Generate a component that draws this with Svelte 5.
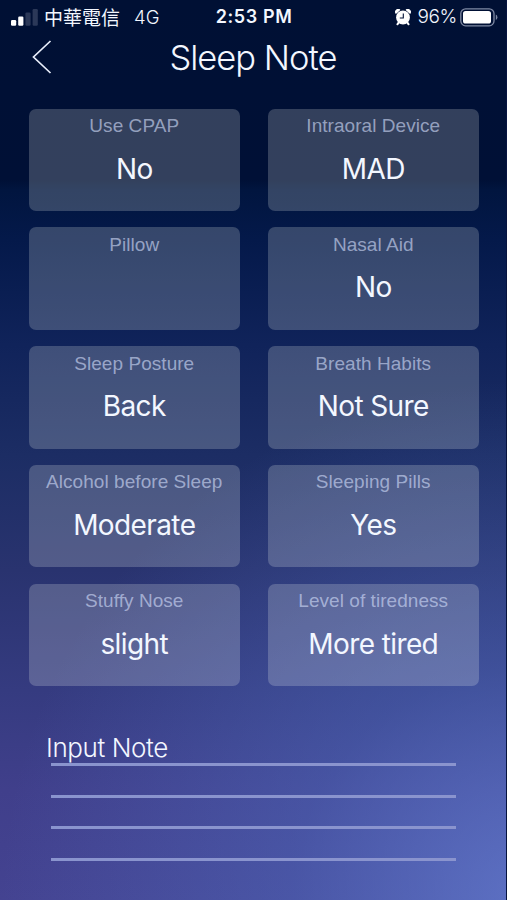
<script>
  const cards = [
    { label: 'Use CPAP', value: 'No' },
    { label: 'Intraoral Device', value: 'MAD' },
    { label: 'Pillow', value: '' },
    { label: 'Nasal Aid', value: 'No' },
    { label: 'Sleep Posture', value: 'Back' },
    { label: 'Breath Habits', value: 'Not Sure' },
    { label: 'Alcohol before Sleep', value: 'Moderate' },
    { label: 'Sleeping Pills', value: 'Yes' },
    { label: 'Stuffy Nose', value: 'slight' },
    { label: 'Level of tiredness', value: 'More tired' }
  ];
  const rules = [0, 1, 2, 3];
</script>

<main class="screen">
  <div class="status">
    <div class="side">
      <svg class="signal" width="27" height="18" viewBox="0 0 27 18">
        <rect x="0" y="12" width="5.2" height="5.8" rx="1.2" fill="#fff" />
        <rect x="7.2" y="8.5" width="5.2" height="9.3" rx="1.2" fill="#fff" />
        <rect x="14.4" y="4.5" width="5.2" height="13.3" rx="1.2" fill="#2b3858" />
        <rect x="21.6" y="1" width="5.2" height="16.8" rx="1.2" fill="#2b3858" />
      </svg>
      <span class="carrier">中華電信</span>
      <span class="network">4G</span>
    </div>
    <span class="time">2:53 PM</span>
    <div class="side right">
      <svg class="alarm" width="16" height="17" viewBox="0 0 16 17">
        <path d="M3.8 13.4 L2.4 15.3 M12.2 13.4 L13.6 15.3" stroke="#fff" stroke-width="2" stroke-linecap="round" />
        <path d="M.9 5 A2.7 2.7 0 0 1 5.4 .9 Z M15.1 5 A2.7 2.7 0 0 0 10.6 .9 Z" fill="#fff" />
        <circle cx="8" cy="8.5" r="6.9" fill="#fff" />
        <path d="M8.3 4.6 V9 H4.8" fill="none" stroke="#001036" stroke-width="1.1" />
      </svg>
      <span class="percent">96%</span>
      <svg class="battery" width="38" height="19" viewBox="0 0 38 19">
        <rect x=".8" y=".8" width="33.2" height="17" rx="4.8" fill="none" stroke="#7e89a3" stroke-width="1.3" />
        <rect x="3" y="3" width="28" height="12.6" rx="2.6" fill="#fff" />
        <path d="M35.8 6.6 Q37.4 7.4 37.4 9.3 Q37.4 11.2 35.8 12 Z" fill="#7e89a3" />
      </svg>
    </div>
  </div>

  <header>
    <svg class="back" width="20" height="34" viewBox="0 0 20 34">
      <path d="M18.5 1 L1.5 17 L18.5 33" fill="none" stroke="#e8eefb" stroke-width="1.7" />
    </svg>
    <h1>Sleep Note</h1>
  </header>

  <section class="grid">
    {#each cards as card}
      <div class="card">
        <span class="label">{card.label}</span>
        <span class="value">{card.value}</span>
      </div>
    {/each}
  </section>

  <section class="note">
    <h2>Input Note</h2>
    <div class="rules">
      {#each rules as rule (rule)}
        <div class="rule"></div>
      {/each}
    </div>
  </section>
</main>

<style>
  :global(body) {
    margin: 0;
    background: #001036;
  }
  .screen {
    box-sizing: border-box;
    width: 507px;
    height: 900px;
    overflow: hidden;
    border-right: 1px solid #06133f;
    color: #f3f7ff;
    font-family: Inter, 'Liberation Sans', sans-serif;
    background:
      radial-gradient(ellipse 530px 520px at 105% 100%, rgba(104, 133, 218, 0.7), rgba(84, 120, 205, 0.36) 45%, rgba(50, 110, 180, 0) 100%),
      linear-gradient(180deg, #001034 0, #001036 180px, #01153f 190px, #04194a 240px, #10235a 345px, #1c2d64 455px, #29336f 570px, #353b80 690px, #403f8b 790px, #444391 900px);
  }
  .status {
    box-sizing: border-box;
    height: 34px;
    padding: 0 8px 0 11px;
    display: grid;
    grid-template-columns: 1fr auto 1fr;
    align-items: center;
    line-height: 34px;
    white-space: nowrap;
  }
  .side {
    display: flex;
    align-items: center;
  }
  .right {
    justify-content: flex-end;
  }
  .signal {
    margin-top: -1px;
  }
  .carrier {
    margin-left: 6px;
    font: 19px/34px 'Noto Sans CJK TC', sans-serif;
  }
  .network {
    margin-left: 14px;
    font-size: 18.5px;
    font-weight: 300;
  }
  .time {
    margin-right: 1px;
    font-size: 18px;
    font-weight: 600;
    letter-spacing: 0.6px;
  }
  .percent {
    margin: 0 3px 0 7px;
    font-size: 19px;
    font-weight: 300;
    letter-spacing: -0.4px;
  }
  header {
    height: 74.5px;
    padding-left: 32px;
    display: flex;
    align-items: flex-start;
  }
  .back {
    margin-top: 6px;
  }
  h1 {
    margin: 4px 0 0 117.5px;
    font-size: 34.5px;
    font-weight: 300;
    line-height: 40px;
    letter-spacing: -1px;
    white-space: nowrap;
  }
  .grid {
    display: grid;
    grid-template-columns: 210.5px 210.5px;
    grid-auto-rows: 102.6px;
    gap: 16.2px 28.5px;
    padding-left: 29px;
  }
  .card {
    display: flex;
    flex-direction: column;
    align-items: center;
    border-radius: 7px;
    background: rgba(250, 255, 245, 0.205);
    white-space: nowrap;
  }
  .label {
    margin-top: 6.5px;
    font: 19px/22px 'Liberation Sans', sans-serif;
    letter-spacing: 0.05px;
    color: rgba(205, 216, 245, 0.65);
  }
  .value {
    margin-top: 13.5px;
    font-size: 28px;
    line-height: 36px;
    letter-spacing: -0.6px;
  }
  .note {
    padding: 46px 50px 0 46px;
  }
  h2 {
    margin: 0;
    font-size: 26px;
    font-weight: 300;
    line-height: 31px;
    letter-spacing: -0.4px;
  }
  .rules {
    margin-left: 5px;
    display: flex;
    flex-direction: column;
    gap: 28.6px;
  }
  .rule {
    height: 3px;
    background: #8a94ce;
  }
</style>
